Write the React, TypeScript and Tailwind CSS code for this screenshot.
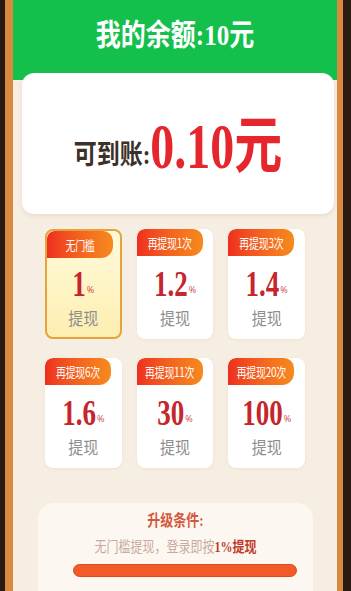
import React from 'react';

const SERIF = "font-['Liberation_Serif','Noto_Sans_CJK_SC',serif]";

const TIERS = [
  { tag: '无门槛', rate: '1', active: true },
  { tag: '再提现1次', rate: '1.2' },
  { tag: '再提现3次', rate: '1.4' },
  { tag: '再提现6次', rate: '1.6' },
  { tag: '再提现11次', rate: '30' },
  { tag: '再提现20次', rate: '100' },
];

function TierCard({ tag, rate, active }: { tag: string; rate: string; active?: boolean }) {
  return (
    <div
      className={
        active
          ? 'h-[110px] rounded-lg border-2 border-[#e6a33c] bg-gradient-to-b from-[#fffadb] to-[#fdeeb0] flex flex-col overflow-hidden'
          : 'h-[110px] rounded-lg bg-white shadow-[0_1px_3px_rgba(180,140,90,0.12)] flex flex-col overflow-hidden'
      }
    >
      {/* Tag */}
      <div className="w-[66px] h-[27px] shrink-0 rounded-tl-lg rounded-tr-[10px] rounded-br-[12px] bg-gradient-to-r from-[#ee2d1f] to-[#f68a1e] flex items-center justify-center">
        <span className="inline-block scale-y-[1.3] text-[10px] leading-none tracking-[-0.3px] text-white font-['Noto_Sans_CJK_SC',sans-serif] whitespace-nowrap">
          {tag}
        </span>
      </div>
      {/* Rate */}
      <div className="flex-1 flex flex-col items-center justify-center pb-1">
        <div className="flex items-baseline text-[#c5262d] mt-1">
          <span className={`inline-block scale-y-[1.35] text-[27px] leading-none font-bold ${SERIF}`}>{rate}</span>
          <span className="inline-block text-[9px] leading-none text-[#d0574f] ml-[1px]">%</span>
        </div>
        <span className="inline-block mt-[12px] scale-y-[1.15] text-[15px] leading-none text-[#8e8e8e] font-['Noto_Sans_CJK_SC',sans-serif]">
          提现
        </span>
      </div>
    </div>
  );
}

export default function App() {
  return (
    <div className="w-[351px] h-[591px] bg-[#2a1a12] pl-[5px] pr-[8px] overflow-hidden">
      <div className="h-full border-l-[8px] border-r-[6px] border-[#d98a40] bg-[#f6eee2] flex flex-col">
        {/* Header */}
        <div className="h-[80px] shrink-0 bg-[#14c04c] flex justify-center pt-[20px]">
          <span className={`inline-block h-[30px] scale-y-[1.2] text-[25px] leading-[30px] font-bold text-white ${SERIF}`}>
            我的余额:10元
          </span>
        </div>

        {/* Amount card */}
        <div className="-mt-[7px] ml-[9px] mr-[3px] h-[141px] shrink-0 rounded-[12px] bg-white shadow-[0_2px_4px_rgba(160,120,80,0.15)] flex items-center justify-center">
          <div className="flex items-baseline mt-[6px]">
            <span className={`inline-block scale-y-[1.2] text-[23px] leading-none font-bold text-[#3b3128] ${SERIF}`}>可到账:</span>
            <span className={`inline-block scale-y-[1.3] text-[48px] leading-none font-bold text-[#e5262c] ${SERIF}`}>0.10元</span>
          </div>
        </div>

        {/* Tiers */}
        <div className="mt-[15px] px-[32px] grid grid-cols-3 gap-x-[15px] gap-y-[19px]">
          {TIERS.map((t) => (
            <TierCard key={t.tag} {...t} />
          ))}
        </div>

        {/* Upgrade conditions */}
        <div className="mt-[35px] ml-[25px] mr-[24px] flex-1 rounded-t-[16px] bg-[#fcf8f1] flex flex-col items-center pt-[9px]">
          <span className={`inline-block scale-y-[1.25] text-[13px] leading-[18px] font-bold text-[#d2583f] ${SERIF}`}>升级条件:</span>
          <p className={`mt-[8px] scale-y-[1.25] text-[12px] leading-[18px] text-[#c9aaa0] ${SERIF}`}>
            无门槛提现，登录即按<span className="font-bold text-[#c43a2c]">1%提现</span>
          </p>
          <div className="mt-[8px] ml-[18px] w-[224px] h-[13px] rounded-full bg-[#f25a29] border border-[#dc4a1e]" />
        </div>
      </div>
    </div>
  );
}
